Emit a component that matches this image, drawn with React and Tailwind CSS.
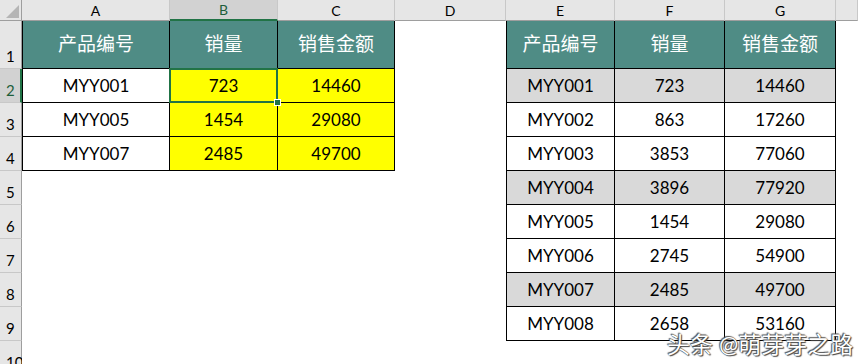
import React from 'react';

const COLS = ['A', 'B', 'C', 'D', 'E', 'F', 'G', ''];

const leftRows = [
  ['MYY001', '723', '14460'],
  ['MYY005', '1454', '29080'],
  ['MYY007', '2485', '49700'],
];

const rightRows = [
  ['MYY001', '723', '14460', true],
  ['MYY002', '863', '17260', false],
  ['MYY003', '3853', '77060', false],
  ['MYY004', '3896', '77920', true],
  ['MYY005', '1454', '29080', false],
  ['MYY006', '2745', '54900', false],
  ['MYY007', '2485', '49700', true],
  ['MYY008', '2658', '53160', false],
];

const headers = ['产品编号', '销量', '销售金额'];

const cellBase = 'box-border flex items-center justify-center';

const Empty = () => <div className="bg-white" />;

// cell inside a bordered table
const Cell = ({ children, fill, first, head }) => {
  let cls = cellBase + ' border-r border-b border-black text-black text-[17px]';
  if (first) cls += ' border-l';
  if (head) cls = cellBase + ' border-r border-b border-black bg-[#4f8c85] text-white text-[19px]' + (first ? ' border-l' : '');
  else if (fill === 'yellow') cls += ' bg-[#ffff00]';
  else if (fill === 'gray') cls += ' bg-[#d9d9d9]';
  else cls += ' bg-white';
  return <div className={cls}>{children}</div>;
};

const RowHead = ({ n, active }) => (
  <div
    className={
      active
        ? 'box-border flex items-end pl-[6px] pb-[1px] bg-[#d2d2d2] border-r-2 border-r-[#217346] border-b border-b-[#c8c8c8] text-[#1e5e3b] text-[15px]'
        : 'box-border flex items-end pl-[6px] pb-[1px] bg-[#e6e6e6] border-r border-r-[#9e9e9e] border-b border-b-[#c8c8c8] text-black text-[15px]'
    }
  >
    {n}
  </div>
);

export default function App() {
  const rows = [];

  // row 1 - headers
  rows.push(
    <React.Fragment key="r1">
      <RowHead n={1} />
      {headers.map((h, i) => (
        <Cell key={'lh' + i} head first={i === 0}>{h}</Cell>
      ))}
      <Empty />
      {headers.map((h, i) => (
        <Cell key={'rh' + i} head first={i === 0}>{h}</Cell>
      ))}
      <Empty />
    </React.Fragment>
  );

  for (let i = 0; i < 9; i++) {
    const r = i + 2;
    const left = leftRows[i];
    const right = rightRows[i];
    rows.push(
      <React.Fragment key={'r' + r}>
        <RowHead n={r} active={r === 2} />
        {left ? (
          <>
            <Cell first>{left[0]}</Cell>
            {r === 2 ? (
              <div className="relative box-border flex items-center justify-center border-r border-b border-black bg-[#ffff00] text-black text-[17px]">
                {left[1]}
                <div className="absolute -left-px -top-px -right-px -bottom-px border-2 border-[#217346] z-10" />
                <div className="absolute -right-[4px] -bottom-[4px] w-[7px] h-[7px] bg-[#217346] border border-white z-20" />
              </div>
            ) : (
              <Cell fill="yellow">{left[1]}</Cell>
            )}
            <Cell fill="yellow">{left[2]}</Cell>
          </>
        ) : (
          <>
            <Empty />
            <Empty />
            <Empty />
          </>
        )}
        <Empty />
        {right ? (
          <>
            <Cell first fill={right[3] ? 'gray' : 'white'}>{right[0]}</Cell>
            <Cell fill={right[3] ? 'gray' : 'white'}>{right[1]}</Cell>
            <Cell fill={right[3] ? 'gray' : 'white'}>{right[2]}</Cell>
          </>
        ) : (
          <>
            <Empty />
            <Empty />
            <Empty />
          </>
        )}
        <Empty />
      </React.Fragment>
    );
  }

  return (
    <div
      className="relative w-[858px] h-[364px] overflow-hidden bg-white"
      style={{ fontFamily: "Lato, 'Noto Sans CJK SC', sans-serif" }}
    >
      <div className="grid grid-cols-[22px_148px_108px_117px_111px_109px_110px_111px_22px] grid-rows-[21px_48px_repeat(9,34px)]">
        {/* corner */}
        <div className="relative box-border bg-[#e6e6e6] border-r border-b border-[#9e9e9e]">
          <svg className="absolute left-[6px] top-[5px]" width="13" height="13" viewBox="0 0 13 13">
            <polygon points="13,0 13,13 0,13" fill="#b5b5b5" />
          </svg>
        </div>
        {COLS.map((c, i) =>
          c === 'B' ? (
            <div
              key={'c' + i}
              className="box-border flex items-center justify-center bg-[#d2d2d2] border-r border-r-[#c8c8c8] border-b-2 border-b-[#217346] text-[#1e5e3b] text-[14px]"
            >
              {c}
            </div>
          ) : (
            <div
              key={'c' + i}
              className="box-border flex items-center justify-center bg-[#e6e6e6] border-r border-r-[#c8c8c8] border-b border-b-[#9e9e9e] text-black text-[14px]"
            >
              {c}
            </div>
          )
        )}
        {rows}
      </div>

      <div
        className="absolute left-[667px] top-[328px] text-[23px] leading-[32px] text-white whitespace-nowrap z-30"
        style={{ textShadow: '0 0 1px #333, 1px 1px 1px #444, -1px -1px 1px #555' }}
      >
        头条 @萌芽芽之路
      </div>
    </div>
  );
}
